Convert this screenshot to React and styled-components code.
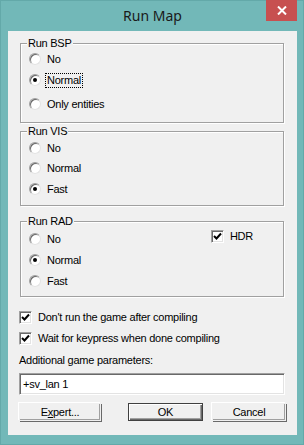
import React from 'react';
import styled, { createGlobalStyle } from 'styled-components';

const Global = createGlobalStyle`
  html, body { margin: 0; padding: 0; background: #72b8b8; }
  body { width: 304px; height: 445px; overflow: hidden; }
  * { box-sizing: border-box; }
`;

const Window = styled.div`
  width: 304px;
  height: 445px;
  background: #72b8b8;
  border: 1px solid #63a9a9;
  display: flex;
  flex-direction: column;
  padding: 0 6px 9px 7px;
`;

const TitleBar = styled.div`
  height: 30px;
  display: grid;
  grid-template-columns: 1fr auto 1fr;
  align-items: start;
`;

const Title = styled.div`
  grid-column: 2;
  font-family: "Noto Sans", "Open Sans", sans-serif;
  font-size: 14px;
  line-height: 30px;
  color: #1a1a1a;
`;

const CloseButton = styled.div`
  grid-column: 3;
  justify-self: end;
  margin-top: -1px;
  width: 31px;
  height: 21px;
  background: #c75050;
  display: flex;
  align-items: center;
  justify-content: center;
`;

const Client = styled.div`
  flex: 1;
  background: #f0f0f0;
  display: flex;
  flex-direction: column;
  padding: 0 11px 0 11px;
  font-family: "Liberation Sans", Arial, sans-serif;
  font-size: 11px;
  letter-spacing: -0.25px;
  color: #000;
`;

const Group = styled.div`
  margin: ${p => p.$mt}px 2px 0 1px;
  height: ${p => p.$h}px;
  border: 1px solid #a0a0a0;
  box-shadow: inset 1px 1px 0 #fff, 1px 1px 0 #fff;
  display: flex;
  flex-direction: column;
`;

const GroupBody = styled.div`
  display: flex;
  flex-direction: row;
  justify-content: space-between;
`;

const Column = styled.div`
  display: flex;
  flex-direction: column;
`;

const Legend = styled.span`
  align-self: flex-start;
  margin: -7px 0 0 6px;
  padding: 0 1px;
  height: 13px;
  line-height: 13px;
  background: #f0f0f0;
`;

const OptionRow = styled.div`
  display: flex;
  align-items: center;
  height: 14px;
  margin-top: ${p => p.$mt || 0}px;
  padding-left: ${p => p.$pl || 0}px;
  padding-right: ${p => p.$pr || 0}px;
`;

const RadioCircle = styled.span`
  width: 12px;
  height: 12px;
  border-radius: 50%;
  background: #fff;
  border: 1px solid;
  border-color: #a0a0a0 #e3e3e3 #e3e3e3 #a0a0a0;
  box-shadow: inset 1px 1px 0 #696969;
  display: flex;
  align-items: center;
  justify-content: center;
  flex: none;
  &::after {
    content: "";
    display: ${p => (p.$checked ? 'block' : 'none')};
    width: 4px;
    height: 4px;
    border-radius: 50%;
    background: #000;
  }
`;

const CheckBox = styled.span`
  width: 13px;
  height: 13px;
  background: #fff;
  border: 1px solid;
  border-color: #a0a0a0 #fff #fff #a0a0a0;
  box-shadow: inset 1px 1px 0 #696969, inset -1px -1px 0 #e3e3e3;
  display: flex;
  align-items: center;
  justify-content: center;
  flex: none;
`;

const Label = styled.span`
  margin-left: ${p => p.$ml}px;
  padding: 0 1px;
  line-height: 13px;
  border: 1px ${p => (p.$focus ? 'dotted #000' : 'solid transparent')};
  white-space: nowrap;
`;

const Caption = styled.div`
  margin-top: 8px;
  height: 14px;
  line-height: 14px;
`;

const TextField = styled.div`
  margin-top: 6px;
  margin-right: 1px;
  height: 22px;
  background: #fff;
  border: 1px solid;
  border-color: #a0a0a0 #fff #fff #a0a0a0;
  box-shadow: inset 1px 1px 0 #696969, inset -1px -1px 0 #e3e3e3;
  padding: 0 3px;
  line-height: 20px;
`;

const ButtonRow = styled.div`
  margin-top: 8px;
  display: flex;
  justify-content: space-between;
`;

const ButtonGroup = styled.div`
  display: flex;
  gap: 9px;
`;

const Button = styled.div`
  width: ${p => p.$w}px;
  height: 18px;
  display: flex;
  align-items: center;
  justify-content: center;
  background: #f0f0f0;
  border: 1px solid ${p => (p.$default ? '#404040' : 'transparent')};
  box-shadow: ${p => p.$default
    ? 'inset 1px 1px 0 #fff, inset -1px -1px 0 #696969, inset -2px -2px 0 #a0a0a0'
    : '-1px -1px 0 #fff, 1px 1px 0 #696969, inset -1px -1px 0 #a0a0a0'};
`;

const U = styled.span`
  text-decoration: underline;
`;

const Check = () => (
  <svg width="9" height="9" viewBox="0 0 9 9">
    <path d="M1 4 L3.5 6.5 L8 1.5" fill="none" stroke="#000" strokeWidth="2" />
  </svg>
);

const Radio = ({ label, checked, focus, mt }) => (
  <OptionRow $mt={mt} $pl={8}>
    <RadioCircle $checked={checked} />
    <Label $ml={4} $focus={focus}>{label}</Label>
  </OptionRow>
);

const CheckOption = ({ label, mt, ml = 4, pl = 0, pr = 0 }) => (
  <OptionRow $mt={mt} $pl={pl} $pr={pr}>
    <CheckBox><Check /></CheckBox>
    <Label $ml={ml}>{label}</Label>
  </OptionRow>
);

export default function App() {
  return (
    <>
      <Global />
      <Window>
        <TitleBar>
          <Title>Run Map</Title>
          <CloseButton>
            <svg width="10" height="9" viewBox="0 0 10 9">
              <path d="M1 0.5 L9 8.5 M9 0.5 L1 8.5" stroke="#fff" strokeWidth="2" />
            </svg>
          </CloseButton>
        </TitleBar>
        <Client>
          <Group $mt={12} $h={80}>
            <Legend>Run BSP</Legend>
            <Radio label="No" mt={2} />
            <Radio label="Normal" checked focus mt={7} />
            <Radio label="Only entities" mt={10} />
          </Group>
          <Group $mt={8} $h={75}>
            <Legend>Run VIS</Legend>
            <Radio label="No" mt={3} />
            <Radio label="Normal" mt={6} />
            <Radio label="Fast" checked mt={7} />
          </Group>
          <Group $mt={15} $h={76}>
            <Legend>Run RAD</Legend>
            <GroupBody>
              <Column>
                <Radio label="No" mt={4} />
                <Radio label="Normal" checked mt={7} />
                <Radio label="Fast" mt={7} />
              </Column>
              <Column>
                <CheckOption label="HDR" mt={1} ml={4} pr={28} />
              </Column>
            </GroupBody>
          </Group>
          <CheckOption label="Don't run the game after compiling" mt={13} />
          <CheckOption label="Wait for keypress when done compiling" mt={7} />
          <Caption>Additional game parameters:</Caption>
          <TextField>+sv_lan 1</TextField>
          <ButtonRow>
            <Button $w={82}>E<U>x</U>pert...</Button>
            <ButtonGroup>
              <Button $w={75} $default>OK</Button>
              <Button $w={74}>Cancel</Button>
            </ButtonGroup>
          </ButtonRow>
        </Client>
      </Window>
    </>
  );
}
